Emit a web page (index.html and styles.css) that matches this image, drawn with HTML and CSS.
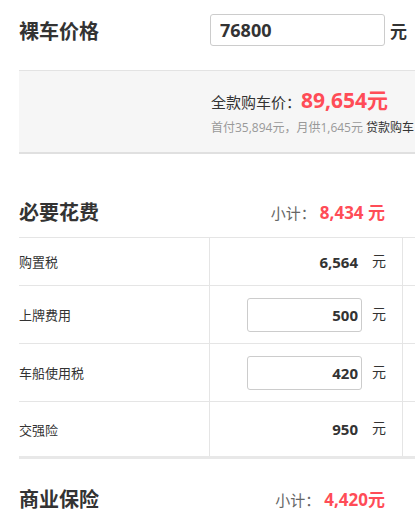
FILE: index.html
```html
<!DOCTYPE html>
<html lang="zh-CN">
<head>
  <meta charset="UTF-8">
  <title>购车计算器</title>
  <meta name="viewport" content="width=device-width, initial-scale=1.0">
  <link rel="stylesheet" href="styles.css">
</head>
<body>
  <div class="wrap">
    <div class="price-row">
      <h2 class="title">裸车价格</h2>
      <input class="price-input" type="text" value="76800">
      <span class="price-unit">元</span>
    </div>

    <div class="total-box">
      <div class="total-line">全款购车价：<span class="red big">89,654元</span></div>
      <div class="loan-line">首付35,894元，月供1,645元 <a class="loan-link">贷款购车</a></div>
    </div>

    <div class="sec-head">
      <h2 class="title">必要花费</h2>
      <div class="subtotal">小计：<span class="red">8,434 元</span></div>
    </div>

    <div class="fee-table">
      <div class="fee-row h48">
        <div class="cell label">购置税</div>
        <div class="cell val"><span class="num">6,564</span><span class="unit">元</span></div>
        <div class="cell extra"></div>
      </div>
      <div class="fee-row h58">
        <div class="cell label">上牌费用</div>
        <div class="cell val"><input class="num-input" type="text" value="500"><span class="unit">元</span></div>
        <div class="cell extra"></div>
      </div>
      <div class="fee-row h58">
        <div class="cell label">车船使用税</div>
        <div class="cell val"><input class="num-input" type="text" value="420"><span class="unit">元</span></div>
        <div class="cell extra"></div>
      </div>
      <div class="fee-row h55">
        <div class="cell label">交强险</div>
        <div class="cell val"><span class="num">950</span><span class="unit">元</span></div>
        <div class="cell extra"></div>
      </div>
    </div>

    <div class="sec-head sec-head2">
      <h2 class="title">商业保险</h2>
      <div class="subtotal">小计：<span class="red">4,420元</span></div>
    </div>
  </div>
</body>
</html>
```

FILE: styles.css
```css
html, body {
  overflow: hidden;
}

body {
  margin: 0;
  font-family: "Open Sans", "Noto Sans CJK SC", sans-serif;
  color: #333;
  background: #fff;
}

.wrap {
  width: 560px;
  padding-left: 19px;
}

.title {
  margin: 0;
  font-size: 20px;
  font-weight: bold;
  color: #333;
}

.price-row {
  display: flex;
  align-items: center;
  height: 32px;
  margin-top: 14px;
}

.price-row .title {
  width: 191px;
}

.price-input {
  width: 175px;
  height: 32px;
  box-sizing: border-box;
  border: 1px solid #ccc;
  border-radius: 3px;
  padding: 0 9px;
  font-family: inherit;
  font-size: 18px;
  font-weight: bold;
  color: #333;
}

.price-unit {
  margin-left: 5px;
  font-size: 17px;
  font-weight: bold;
}

.total-box {
  margin-top: 24px;
  height: 81px;
  background: #f6f6f6;
  border-top: 1px solid #e3e3e3;
  border-bottom: 2px solid #e0e0e0;
  padding-left: 192px;
}

.total-line {
  margin-top: 14px;
  height: 30px;
  line-height: 30px;
  font-size: 15px;
}

.red {
  color: #ff4c57;
  font-weight: bold;
}

.big {
  font-size: 21px;
}

.loan-line {
  margin-top: 4px;
  font-size: 12px;
  line-height: 18px;
  color: #999;
  white-space: nowrap;
}

.loan-link {
  color: #333;
}

.sec-head {
  display: flex;
  align-items: center;
  justify-content: space-between;
  width: 366px;
  height: 40px;
  margin-top: 37px;
  margin-bottom: 6px;
}

.sec-head2 {
  margin-top: 19px;
}

.subtotal {
  font-size: 15px;
  color: #666;
}

.subtotal .red {
  font-size: 17px;
  margin-left: 4px;
}

.fee-table {
  border-top: 1px solid #e5e5e5;
  border-bottom: 3px solid #e8e8e8;
}

.fee-row {
  display: grid;
  grid-template-columns: 190px 193px 1fr;
  border-top: 1px solid #e5e5e5;
}

.fee-row:first-child {
  border-top: none;
}

.h48 { height: 47px; }
.h58 { height: 57px; }
.h55 { height: 54px; }

.cell {
  display: flex;
  align-items: center;
}

.label {
  font-size: 13px;
  color: #333;
}

.val {
  border-left: 1px solid #e5e5e5;
  justify-content: flex-end;
  padding-right: 16px;
}

.extra {
  border-left: 1px solid #e5e5e5;
}

.num {
  width: 115px;
  box-sizing: border-box;
  padding-right: 4px;
  text-align: right;
  font-size: 15px;
  font-weight: bold;
}

.num-input {
  width: 115px;
  height: 34px;
  box-sizing: border-box;
  border: 1px solid #ccc;
  border-radius: 3px;
  padding: 0 3px;
  text-align: right;
  font-family: inherit;
  font-size: 15px;
  font-weight: bold;
  color: #333;
}

.unit {
  margin-left: 10px;
  font-size: 14px;
  margin-top: -4px;
}
```
